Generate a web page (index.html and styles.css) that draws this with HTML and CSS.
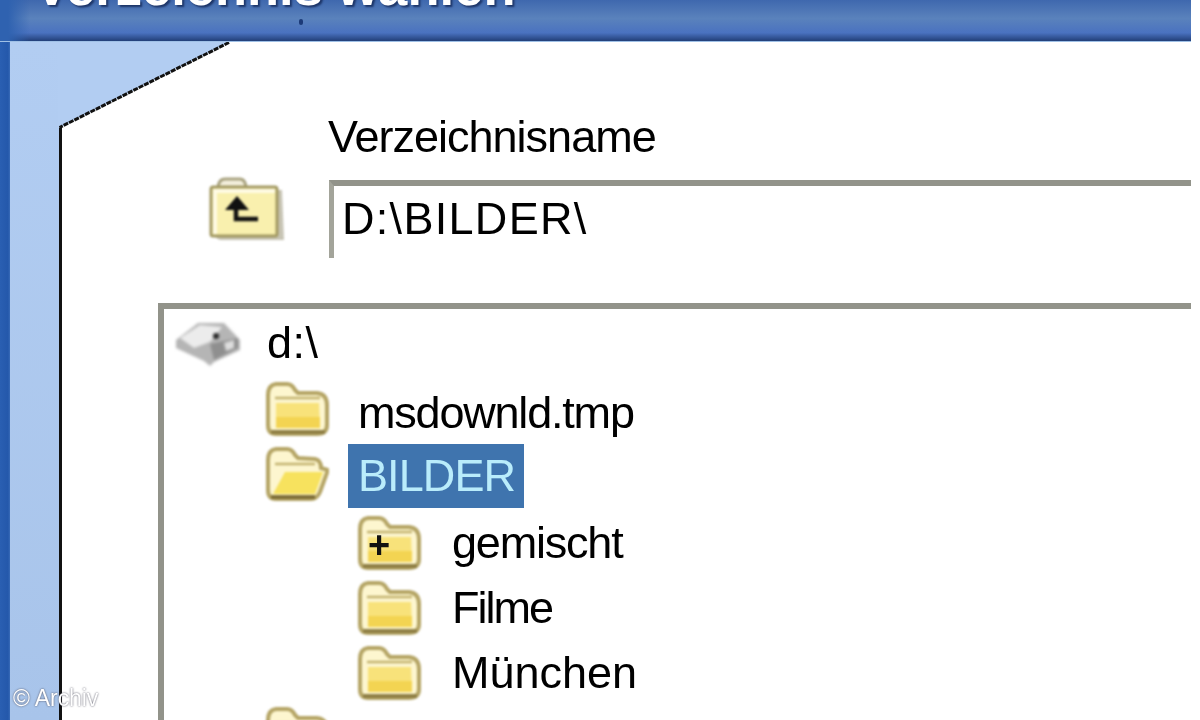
FILE: index.html
```html
<!DOCTYPE html>
<html lang="de">
<head>
<meta charset="utf-8">
<title>Verzeichnis wählen</title>
<link rel="stylesheet" href="styles.css">
</head>
<body>
<svg class="defs" width="0" height="0" aria-hidden="true">
  <defs>
    <symbol id="folder" viewBox="0 0 64 56">
      <path d="M3 14 Q3 4 11 3 L22 3 Q27 3 30 9 L33 12 L52 12 Q62 13 62 24 L62 44 Q62 53 52 53 L11 53 Q3 53 3 44 Z" fill="#fdf6cf" stroke="#b5a565" stroke-width="4"/>
      <path d="M11 22 L54 22 L55 46 L11 46 Z" fill="#f8e27a"/>
      <path d="M11 36 L55 36 L55 47 L11 47 Z" fill="#f3d452"/>
      <path d="M6 51 L60 51" stroke="#8f7f45" stroke-width="4"/>
      <path d="M10 17 L55 17" stroke="#c4b470" stroke-width="2.5"/>
    </symbol>
    <symbol id="folder-open" viewBox="0 0 64 56">
      <path d="M3 14 Q3 4 11 3 L22 3 Q27 3 30 9 L33 12 L50 13 Q56 14 56 22 L63 24 L55 46 Q52 53 46 53 L11 53 Q3 53 3 44 Z" fill="#fdf6cf" stroke="#b5a565" stroke-width="4"/>
      <path d="M20 26 L58 26 L50 48 L8 48 Z" fill="#f7e25e"/>
      <path d="M6 51 L50 51" stroke="#7f6f38" stroke-width="4"/>
      <path d="M10 18 L50 18" stroke="#c4b470" stroke-width="2.5"/>
    </symbol>
  </defs>
</svg>
<div class="window">
  <header class="titlebar">
    <h1 class="title">Verzeichnis wählen</h1>
    <span class="speck"></span>
  </header>
  <div class="main">
    <div class="rail"></div>
    <div class="sidebar"></div>
    <div class="panel">
      <div class="label">Verzeichnisname</div>
      <div class="path-row">
        <svg class="up-icon" viewBox="0 0 76 66" aria-hidden="true">
          <path d="M5 12 H71 L73 62 H9 L5 60 Z" fill="#8f8a6a" opacity=".5" transform="translate(3 2)"/>
          <path d="M10 11 Q11 3 17 3 L32 3 Q37 3 38 11" fill="#f3efdc" stroke="#a9a380" stroke-width="3"/>
          <rect x="3" y="11" width="66" height="49" rx="2" fill="#f9f0ae" stroke="#a39a63" stroke-width="3"/>
          <path d="M5 13 H67 V17 H9 V58 H5 Z" fill="#fffbe4"/>
          <path d="M29 20 L41 34 H17 Z" fill="#111"/>
          <path d="M28 30 V43 H50" fill="none" stroke="#111" stroke-width="4.5"/>
        </svg>
        <div class="path-field">D:\BILDER\</div>
      </div>
      <div class="tree">
        <div class="row row-drive">
          <svg class="drive-icon" viewBox="0 0 68 50" aria-hidden="true">
            <path d="M2 22 L24 5 L50 5 L66 22 L66 32 L40 44 L36 48 L30 43 L2 30 Z" fill="#b5b5b5"/>
            <path d="M6 20 L26 7 L48 9 L36 24 L20 30 Z" fill="#ececec"/>
            <path d="M36 26 L64 20 L64 30 L40 42 Z" fill="#8f8f8f"/>
            <path d="M50 25 L60 22 L60 30 L52 33 Z" fill="#dedede"/>
            <circle cx="42" cy="18" r="3" fill="#222"/>
          </svg>
          <span class="item-text">d:\</span>
        </div>
        <div class="row level-1">
          <svg class="folder"><use href="#folder"/></svg>
          <span class="item-text tight">msdownld.tmp</span>
        </div>
        <div class="row level-1">
          <svg class="folder"><use href="#folder-open"/></svg>
          <span class="item-text selected">BILDER</span>
        </div>
        <div class="row level-2">
          <span class="folder-wrap">
            <svg class="folder"><use href="#folder"/></svg>
            <span class="plus">+</span>
          </span>
          <span class="item-text tight">gemischt</span>
        </div>
        <div class="row level-2">
          <svg class="folder"><use href="#folder"/></svg>
          <span class="item-text tighter">Filme</span>
        </div>
        <div class="row level-2">
          <svg class="folder"><use href="#folder"/></svg>
          <span class="item-text">München</span>
        </div>
        <div class="row level-1 row-cut">
          <svg class="folder"><use href="#folder"/></svg>
          <span class="item-text">i</span>
        </div>
      </div>
    </div>
  </div>
  <svg class="corner" viewBox="0 0 172 87" aria-hidden="true">
    <polygon points="0,0 172,0 1,86 0,86" fill="#b2cdf2"/>
    <path d="M171 0.5 L1.5 85.5" fill="none" stroke="#111" stroke-width="3" stroke-dasharray="5 1"/>
  </svg>
  <div class="credit">© Archiv</div>
</div>
</body>
</html>
```
FILE: styles.css
```css
* { box-sizing: border-box; }
html, body { margin: 0; height: 100%; background: #fff; overflow: hidden; }
.defs { position: absolute; }
.window {
  position: relative;
  width: 1200px;
  height: 720px;
  display: flex;
  flex-direction: column;
  overflow: hidden;
  font-family: "Liberation Sans", Arial, sans-serif;
  color: #000;
  background: #fff;
}
.titlebar {
  position: relative;
  flex: none;
  width: 1191px;
  height: 42px;
  padding-left: 34px;
  overflow: hidden;
  background:
    linear-gradient(90deg, #2f62b0 0, #2f62b0 8px, rgba(47, 98, 176, 0) 30px),
    linear-gradient(#3f68ae 0, #5a82bc 45%, #4a72c0 80%, #223f78 100%);
  border-bottom: 1px solid #9fc0e6;
}
.title {
  margin: -39px 0 0;
  font-size: 52.5px;
  line-height: 52px;
  font-weight: 700;
  color: #fff;
  white-space: nowrap;
  text-shadow: 2px 2px 2px #1d3568;
  filter: blur(.6px);
}
.speck {
  position: absolute;
  left: 299px;
  top: 19px;
  width: 4px;
  height: 6px;
  border-radius: 2px;
  background: #1c3a78;
  filter: blur(.6px);
}
.main { flex: 1; display: flex; min-height: 0; }
.rail { flex: none; width: 10px; background: linear-gradient(90deg, #2a5fb2, #2458ab 80%, #3a6cb8); }
.sidebar { flex: none; width: 49px; background: linear-gradient(#b2cdf2, #a8c4ea); }
.panel {
  flex: 1;
  min-width: 0;
  padding: 70px 9px 0 0;
  background: #fff;
  border-left: 3px solid #111;
  overflow: hidden;
}
.label {
  margin-left: 266px;
  font-size: 45px;
  line-height: 50px;
  letter-spacing: -1px;
  white-space: nowrap;
  filter: blur(.7px);
}
.path-row {
  display: flex;
  align-items: flex-start;
  margin-top: 18px;
  margin-left: 146px;
}
.up-icon {
  flex: none;
  width: 76px;
  height: 66px;
  margin-top: -4px;
  margin-right: 45px;
  filter: blur(1px);
}
.path-field {
  flex: 1;
  height: 78px;
  padding: 5px 0 0 8px;
  font-size: 45px;
  line-height: 56px;
  letter-spacing: 1.3px;
  white-space: nowrap;
  border-top: 6px solid #92938a;
  border-left: 5px solid #a3a49a;
  filter: blur(.7px);
}
.tree {
  margin-top: 45px;
  margin-left: 96px;
  height: 500px;
  padding-top: 1px;
  border-top: 6px solid #92938a;
  border-left: 6px solid #92938a;
}
.row {
  display: flex;
  align-items: center;
  height: 65px;
}
.row-drive { margin-bottom: 5px; padding-left: 10px; }
.level-1 { padding-left: 101px; }
.level-2 { padding-left: 193px; }
.level-1 .folder { margin-top: -7px; }
.drive-icon { flex: none; width: 68px; height: 50px; margin-right: 25px; filter: blur(1.8px); }
.folder { flex: none; width: 64px; height: 56px; filter: blur(1.3px); }
.folder-wrap { position: relative; flex: none; width: 64px; height: 56px; }
.plus {
  position: absolute;
  left: 6px;
  top: 8px;
  width: 32px;
  font-size: 38px;
  line-height: 44px;
  font-weight: 700;
  text-align: center;
  color: #111;
  filter: blur(.6px);
}
.item-text {
  font-size: 45px;
  line-height: 64px;
  white-space: nowrap;
  filter: blur(.7px);
}
.level-1 .item-text { margin-left: 29px; }
.level-2 .item-text { margin-left: 31px; }
.tight { letter-spacing: -1.2px; }
.tighter { letter-spacing: -2px; }
.row-drive .item-text { margin-left: 0; letter-spacing: .5px; }
.level-1 .selected {
  margin-left: 19px;
  margin-bottom: 3px;
  padding: 0 9px 0 10px;
  letter-spacing: -.9px;
  background: #3f74ae;
  color: #b9ecfb;
}
.corner {
  position: absolute;
  left: 58px;
  top: 42px;
  width: 172px;
  height: 87px;
}
.credit {
  position: absolute;
  left: 13px;
  top: 685px;
  font-size: 23px;
  line-height: 26px;
  letter-spacing: -.1px;
  color: #fff;
  white-space: nowrap;
  text-shadow: 0 0 2px #445;
  filter: blur(.4px);
}
```
